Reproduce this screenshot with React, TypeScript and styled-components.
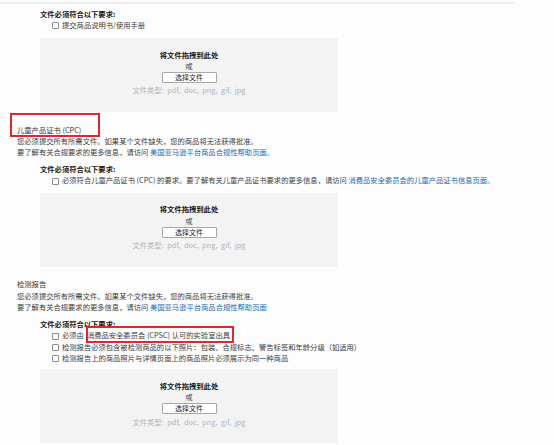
import React from 'react'
import styled, { createGlobalStyle } from 'styled-components'

const GlobalStyle = createGlobalStyle`
  html, body {
    margin: 0;
    padding: 0;
    background: #fdfdfd;
  }
  body {
    font-family: 'Noto Sans CJK SC', 'Noto Sans', sans-serif;
  }
`

const Page = styled.div`
  width: 554px;
  height: 445px;
  overflow: hidden;
  box-sizing: border-box;
  padding-left: 17px;
  font-size: 7.3px;
  line-height: 11.4px;
  color: #3c3c3c;
`

const TopRule = styled.div`
  height: 2px;
  margin: 2px 40px 4.5px -17px;
  background: #eeeeee;
`

const Section = styled.section`
  margin-top: 12.5px;
`

const Heading = styled.div`
  color: #333;
`

const Para = styled.div`
  white-space: nowrap;
`

const Link = styled.a`
  color: #2368b0;
  text-decoration: none;
`

// red annotation frame drawn over the text it marks
const Marked = styled.span<{ $inset: string; $gap?: number }>`
  position: relative;
  margin-left: ${(p) => p.$gap ?? 0}px;

  &::after {
    content: '';
    position: absolute;
    inset: ${(p) => p.$inset};
    border: 2px solid #e2262b;
    pointer-events: none;
  }
`

const Requirements = styled.div<{ $space?: number }>`
  margin: ${(p) => p.$space ?? 0}px 0 0 23px;
  width: 298px;
`

const ReqTitle = styled.div`
  font-weight: 700;
  color: #151515;
`

const CheckRow = styled.div`
  display: flex;
  align-items: center;
  gap: 3px;
  padding-left: 12px;
  white-space: nowrap;
`

const Box = styled.span`
  flex-shrink: 0;
  width: 7px;
  height: 7px;
  box-sizing: border-box;
  border: 1px solid #8c8c8c;
  border-radius: 1px;
  background: #fff;
`

const DropZone = styled.div<{ $space: number }>`
  margin-top: ${(p) => p.$space}px;
  height: 74px;
  box-sizing: border-box;
  padding-top: 11.5px;
  display: flex;
  flex-direction: column;
  align-items: center;
  background: #f3f3f3;
`

const DropTitle = styled.div`
  font-weight: 700;
  color: #151515;
`

const OrLine = styled.div`
  line-height: 10px;
`

const PickButton = styled.button`
  width: 55px;
  height: 11px;
  margin-top: 1px;
  padding: 0;
  box-sizing: border-box;
  border: 1px solid #a8a8a8;
  border-radius: 1px;
  background: #fff;
  font-family: inherit;
  font-size: 7px;
  line-height: 9px;
  color: #222;
`

const FileTypes = styled.div`
  margin-top: 2.5px;
  color: #b3b3b3;
  word-spacing: 2px;
`

const Drop = ({ space }: { space: number }) => (
  <DropZone $space={space}>
    <DropTitle>将文件拖拽到此处</DropTitle>
    <OrLine>或</OrLine>
    <PickButton>选择文件</PickButton>
    <FileTypes>文件类型: pdf, doc, png, gif, jpg</FileTypes>
  </DropZone>
)

const Check = ({ children }: { children: React.ReactNode }) => (
  <CheckRow>
    <Box />
    <span>{children}</span>
  </CheckRow>
)

const App = () => (
  <>
    <GlobalStyle />
    <Page>
      <TopRule />

      <Requirements>
        <ReqTitle>文件必须符合以下要求:</ReqTitle>
        <Check>提交商品说明书/使用手册</Check>
        <Drop space={6.7} />
      </Requirements>

      <Section>
        <Heading>
          <Marked $inset="-12px -19px -2px -7px">儿童产品证书 (CPC)</Marked>
        </Heading>
        <Para>您必须提交所有所需文件。如果某个文件缺失，您的商品将无法获得批准。</Para>
        <Para>
          要了解有关合规要求的更多信息，请访问 <Link href="#">美国亚马逊平台商品合规性帮助页面。</Link>
        </Para>
        <Requirements $space={5.2}>
          <ReqTitle>文件必须符合以下要求:</ReqTitle>
          <Check>
            必须符合儿童产品证书 (CPC) 的要求。要了解有关儿童产品证书要求的更多信息，请访问{' '}
            <Link href="#">消费品安全委员会的儿童产品证书信息页面。</Link>
          </Check>
          <Drop space={6} />
        </Requirements>
      </Section>

      <Section>
        <Heading>检测报告</Heading>
        <Para>您必须提交所有所需文件。如果某个文件缺失，您的商品将无法获得批准。</Para>
        <Para>
          要了解有关合规要求的更多信息，请访问 <Link href="#">美国亚马逊平台商品合规性帮助页面</Link>
        </Para>
        <Requirements $space={5.6}>
          <ReqTitle>文件必须符合以下要求:</ReqTitle>
          <Check>
            必须由
            <Marked $gap={3} $inset="-4px -4px -2.5px -1px">
              消费品安全委员会 (CPSC) 认可的实验室出具
            </Marked>
          </Check>
          <Check>检测报告必须包含被检测商品的以下照片：包装、合规标志、警告标签和年龄分级（如适用）</Check>
          <Check>检测报告上的商品照片与详情页面上的商品照片必须展示为同一种商品</Check>
          <Drop space={4.5} />
        </Requirements>
      </Section>
    </Page>
  </>
)

export default App
